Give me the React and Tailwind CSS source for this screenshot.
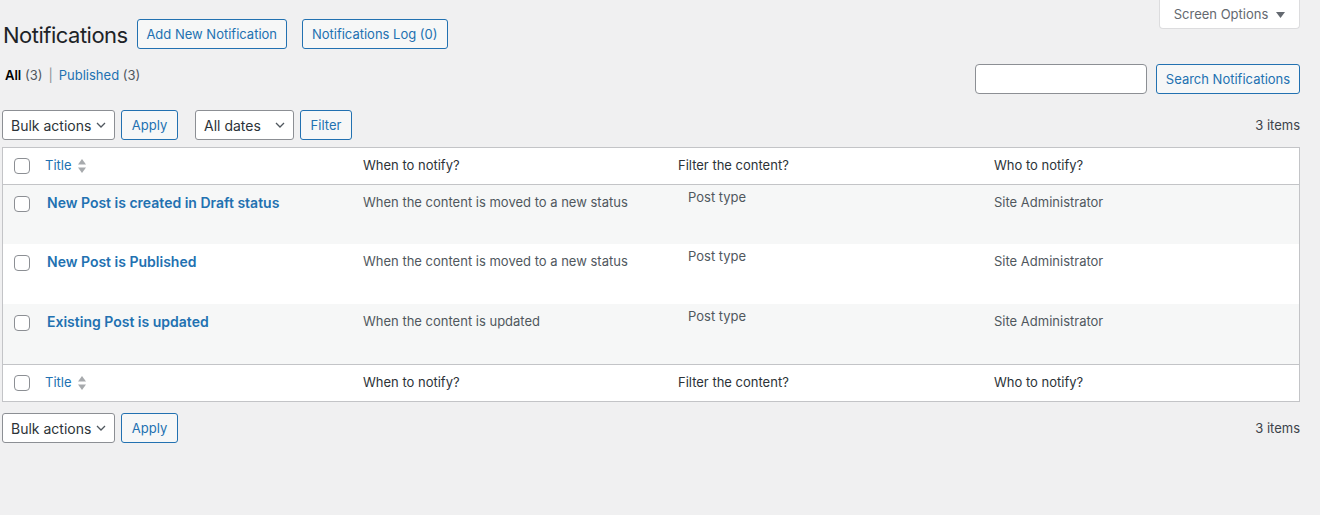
import React from 'react';

const rows = [
  { title: 'New Post is created in Draft status', when: 'When the content is moved to a new status', alt: true },
  { title: 'New Post is Published', when: 'When the content is moved to a new status', alt: false },
  { title: 'Existing Post is updated', when: 'When the content is updated', alt: true },
];

const cols = 'grid grid-cols-[32px_318px_315px_316px_1fr]';

const Checkbox = () => (
  <span className="block h-[16px] w-[16px] rounded-[4px] border border-[#8c8f94] bg-white" />
);

const Chevron = () => (
  <svg width="10" height="6" viewBox="0 0 10 6" className="shrink-0">
    <path d="M1 1l4 4 4-4" fill="none" stroke="#50575e" strokeWidth="1.3" />
  </svg>
);

const SortArrows = () => (
  <svg width="10" height="16" viewBox="0 0 10 16" className="ml-[5px]">
    <path d="M5 1l4 5.5H1z" fill="#a7aaad" />
    <path d="M5 15l4-5.5H1z" fill="#a7aaad" />
  </svg>
);

const Button = ({ children, className = '' }) => (
  <button className={`flex h-[30px] items-center justify-center whitespace-nowrap rounded-[3px] border border-[#2271b1] bg-[#f6f7f7] pt-[2px] text-[13px] text-[#2271b1] ${className}`}>
    {children}
  </button>
);

const Select = ({ label, width }) => (
  <div className={`flex h-[30px] items-center justify-between rounded-[3px] border border-[#8c8f94] bg-white pl-[8px] pr-[8px] text-[14px] text-[#2c3338] ${width}`}>
    <span className="whitespace-nowrap">{label}</span>
    <Chevron />
  </div>
);

const HeadRow = () => (
  <div className={`${cols} h-[36px] items-center text-[13px] text-[#2c3338]`}>
    <div className="flex justify-end pr-[5px]"><Checkbox /></div>
    <div className="flex items-center pl-[10px] text-[#2271b1]">
      Title
      <SortArrows />
    </div>
    <div className="pl-[10px]">When to notify?</div>
    <div className="pl-[10px]">Filter the content?</div>
    <div className="pl-[10px]">Who to notify?</div>
  </div>
);

const Tablenav = ({ filters }) => (
  <div className="flex h-[30px] items-center justify-between">
    <div className="flex items-center">
      <Select label="Bulk actions" width="w-[113px]" />
      <Button className="ml-[6px] w-[57px]">Apply</Button>
      {filters && (
        <>
          <Select label="All dates" width="ml-[17px] w-[99px]" />
          <Button className="ml-[6px] w-[52px]">Filter</Button>
        </>
      )}
    </div>
    <span className="pt-[2px] text-[13px] text-[#3c434a]">3 items</span>
  </div>
);

export default function App() {
  return (
    <div className="min-h-screen bg-[#f0f0f1] font-['Inter','Liberation_Sans',sans-serif] text-[13px] text-[#3c434a]">
      <div className="ml-[2px] mr-[20px]">
        <div className="flex items-start justify-between">
          <div className="mt-[19px] flex h-[30px] items-center">
            <h1 className="pl-[1px] pt-[1px] text-[22px] font-normal leading-[30px] tracking-[-0.5px] text-[#1d2327]">Notifications</h1>
            <Button className="ml-[9px] w-[150px]">Add New Notification</Button>
            <Button className="ml-[15px] w-[146px]">Notifications Log (0)</Button>
          </div>
          <button className="flex h-[29px] w-[141px] items-center justify-center gap-[8px] rounded-b-[4px] border border-t-0 border-[#dcdcde] bg-white pt-[2px] text-[13px] text-[#646970]">
            Screen Options
            <svg width="9" height="6" viewBox="0 0 9 6"><path d="M0 0h9L4.5 6z" fill="#646970" /></svg>
          </button>
        </div>

        <div className="mt-[15px] flex h-[30px] items-start justify-between">
          <div className="pl-[3px] pt-[1px] leading-[20px] text-[#50575e]">
            <span className="font-semibold text-black">All</span> (3)
            <span className="mx-[6px] text-[#8c8f94]">|</span>
            <span className="text-[#2271b1]">Published</span> (3)
          </div>
          <div className="flex items-center">
            <div className="h-[30px] w-[172px] rounded-[4px] border border-[#8c8f94] bg-white" />
            <Button className="ml-[9px] w-[144px]">Search Notifications</Button>
          </div>
        </div>

        <div className="mt-[16px]">
          <Tablenav filters />
        </div>

        <div className="mt-[7px] border border-[#c3c4c7] bg-white">
          <div className="border-b border-[#c3c4c7]">
            <HeadRow />
          </div>
          {rows.map((r, i) => (
            <div key={r.title} className={`${cols} ${i === 0 ? 'h-[59px]' : 'h-[60px]'} items-start ${r.alt ? 'bg-[#f6f7f7]' : 'bg-white'}`}>
              <div className="flex justify-end pr-[5px] pt-[11px]"><Checkbox /></div>
              <div className="pl-[12px] pt-[8px] text-[14px] font-semibold leading-[20px] text-[#2271b1]">{r.title}</div>
              <div className="pl-[10px] pt-[8px] leading-[19px] text-[#50575e]">{r.when}</div>
              <div className="pl-[20px] pt-[3px] leading-[19px] text-[#50575e]">Post type</div>
              <div className="pl-[10px] pt-[8px] leading-[19px] text-[#50575e]">Site Administrator</div>
            </div>
          ))}
          <div className="border-t border-[#c3c4c7]">
            <HeadRow />
          </div>
        </div>

        <div className="mt-[11px]">
          <Tablenav />
        </div>
      </div>
    </div>
  );
}
